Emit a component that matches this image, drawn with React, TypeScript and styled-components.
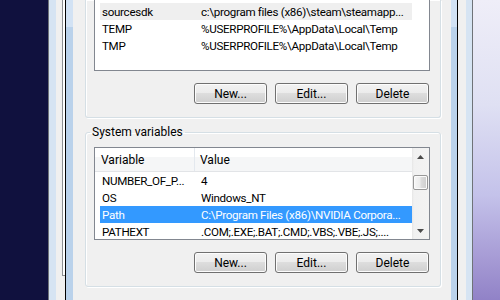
import React from "react";
import styled, { createGlobalStyle } from "styled-components";

const GlobalStyle = createGlobalStyle`
  html, body {
    margin: 0;
    padding: 0;
  }
  body {
    width: 500px;
    height: 300px;
    overflow: hidden;
    font-family: Roboto, "Liberation Sans", sans-serif;
    font-size: 11.6px;
    color: #000;
  }
`;

const Desktop = styled.div`
  display: flex;
  width: 500px;
  height: 300px;
  overflow: hidden;
`;

const Wallpaper = styled.div<{ $side: "left" | "right" }>`
  flex: ${(p) => (p.$side === "left" ? "0 0 48px" : "1")};
  background: ${(p) =>
    p.$side === "left"
      ? "#10113e"
      : "linear-gradient(180deg, #efeef8 0%, #dfe0f3 35%, #c4c2ea 65%, #a89dd6 85%, #9182c7 100%)"};
`;

// the System Properties window, behind
const BackWindow = styled.div`
  flex: 0 0 425px;
  display: flex;
  box-sizing: border-box;
  border-left: 1px solid #6f7378;
  border-right: 1px solid #6f7378;
  padding: 0 6px 0 7px;
  background: #d6e4f3;
`;

const BackBody = styled.div`
  flex: 1;
  display: flex;
  align-items: flex-start;
  padding: 0 8px 0 6px;
  background: #f0f0f0;
`;

const TabEdge = styled.div`
  flex: 0 0 3px;
  box-sizing: border-box;
  height: 276px;
  border-left: 1px solid #8d9093;
  border-bottom: 1px solid #8d9093;
  background: #fff;
`;

// the Environment Variables dialog, in front
const Dialog = styled.div`
  flex: 1;
  align-self: stretch;
  display: flex;
  box-sizing: border-box;
  border-left: 1px solid #000;
  border-right: 1px solid #000;
  padding: 0 6px 0 7px;
  background: linear-gradient(#d2e2f4 0 27px, #bad2eb 27px);
`;

const DialogBody = styled.div`
  flex: 1;
  display: flex;
  flex-direction: column;
  background: #f0f0f0;
`;

const GroupBox = styled.fieldset<{ $clipped?: boolean }>`
  margin: ${(p) => (p.$clipped ? "0" : "7px")} 10px 0 12px;
  padding: ${(p) => (p.$clipped ? "0" : "8px")} 10px 13px 8px;
  border: 1px solid #d5dfe5;
  border-top: ${(p) => (p.$clipped ? "none" : "1px solid #d5dfe5")};
  border-radius: ${(p) => (p.$clipped ? "0 0 3px 3px" : "3px")};
  box-shadow: inset 1px 1px 0 #fff, 1px 1px 0 #fff;
  min-inline-size: 0;
`;

const Legend = styled.legend`
  margin-left: -4px;
  padding: 1px 2px 0;
  line-height: 13px;
  font-size: 12px;
`;

const ListView = styled.div<{ $clipped?: boolean; $height: number }>`
  height: ${(p) => p.$height}px;
  box-sizing: border-box;
  display: flex;
  overflow: hidden;
  border: 1px solid #828790;
  border-top: ${(p) => (p.$clipped ? "none" : "1px solid #828790")};
  padding-top: ${(p) => (p.$clipped ? "3px" : "0")};
  background: #fff;
`;

const ListColumn = styled.div`
  flex: 1;
  display: flex;
  flex-direction: column;
  min-width: 0;
`;

const Header = styled.div`
  display: grid;
  grid-template-columns: 100px 1fr;
  height: 24px;
  box-sizing: border-box;
  border-bottom: 1px solid #e2e4e7;
  background: linear-gradient(#fff 0 40%, #f5f6f7 40%);
`;

const HeaderCell = styled.div<{ $divider?: boolean }>`
  box-sizing: border-box;
  padding: 2px 0 0 ${(p) => (p.$divider ? "6px" : "5px")};
  line-height: 21px;
  font-size: 12px;
  border-right: ${(p) => (p.$divider ? "1px solid #e3e8ee" : "none")};
`;

const Row = styled.div<{ $state?: "selected" | "inactive" }>`
  display: grid;
  grid-template-columns: 99px 1fr;
  width: 312px;
  height: 17px;
  margin-left: 5px;
  box-sizing: border-box;
  padding-top: 2px;
  line-height: 15px;
  letter-spacing: -0.3px;
  background: ${(p) =>
    p.$state === "selected" ? "#3399ff" : p.$state === "inactive" ? "#efefef" : "transparent"};
  color: ${(p) => (p.$state === "selected" ? "#fff" : "#000")};
`;

const Cell = styled.div`
  padding-left: 2px;
  white-space: nowrap;
  overflow: hidden;
`;

const ScrollBar = styled.div`
  flex: 0 0 17px;
  display: flex;
  flex-direction: column;
  align-items: center;
  background: linear-gradient(90deg, #e6e6e6 0, #f1f1f1 2px, #f3f3f3 100%);
`;

const ArrowButton = styled.div`
  height: 17px;
  width: 17px;
  display: flex;
  align-items: center;
  justify-content: center;
`;

const Thumb = styled.div`
  width: 15px;
  height: 15px;
  margin-top: 10px;
  box-sizing: border-box;
  border: 1px solid #979797;
  border-radius: 2px;
  background: linear-gradient(90deg, #f7f7f7 0%, #ececec 45%, #dcdcdc 55%, #cdcdcd 100%);
  box-shadow: inset 0 0 0 1px #fbfbfb;
`;

const Spacer = styled.div`
  flex: 1;
`;

const ButtonRow = styled.div`
  display: flex;
  justify-content: flex-end;
  gap: 8px;
  margin-top: 12px;
  padding-right: 1px;
`;

const PushButton = styled.button`
  width: 73px;
  height: 21px;
  padding: 1px 0 0;
  box-sizing: border-box;
  border: 1px solid #707070;
  border-radius: 3px;
  background: linear-gradient(#f2f2f2 0%, #ebebeb 50%, #dddddd 50%, #cfcfcf 100%);
  box-shadow: inset 0 0 0 1px #fcfcfc;
  font-family: inherit;
  font-size: 12px;
  color: #000;
`;

const Arrow = ({ up }: { up?: boolean }) => (
  <svg width="7" height="4" viewBox="0 0 7 4">
    <polygon points={up ? "0,4 3.5,0 7,4" : "0,0 7,0 3.5,4"} fill="#4a4a4a" />
  </svg>
);

interface IVariable {
  name: string;
  value: string;
  state?: "selected" | "inactive";
}

const userVars: IVariable[] = [
  { name: "sourcesdk", value: "c:\\program files (x86)\\steam\\steamapp...", state: "inactive" },
  { name: "TEMP", value: "%USERPROFILE%\\AppData\\Local\\Temp" },
  { name: "TMP", value: "%USERPROFILE%\\AppData\\Local\\Temp" },
];

const systemVars: IVariable[] = [
  { name: "NUMBER_OF_P...", value: "4" },
  { name: "OS", value: "Windows_NT" },
  { name: "Path", value: "C:\\Program Files (x86)\\NVIDIA Corpora...", state: "selected" },
  { name: "PATHEXT", value: ".COM;.EXE;.BAT;.CMD;.VBS;.VBE;.JS;...." },
];

const Buttons = () => (
  <ButtonRow>
    <PushButton>New...</PushButton>
    <PushButton>Edit...</PushButton>
    <PushButton>Delete</PushButton>
  </ButtonRow>
);

const App = () => {
  return (
    <>
      <GlobalStyle />
      <Desktop>
        <Wallpaper $side="left" />
        <BackWindow>
          <BackBody>
            <TabEdge />
            <Dialog>
              <DialogBody>
                <GroupBox $clipped>
                  <ListView $clipped $height={71}>
                    <ListColumn>
                      {userVars.map((v) => (
                        <Row key={v.name} $state={v.state}>
                          <Cell>{v.name}</Cell>
                          <Cell>{v.value}</Cell>
                        </Row>
                      ))}
                    </ListColumn>
                  </ListView>
                  <Buttons />
                </GroupBox>

                <GroupBox>
                  <Legend>System variables</Legend>
                  <ListView $height={93}>
                    <ListColumn>
                      <Header>
                        <HeaderCell $divider>Variable</HeaderCell>
                        <HeaderCell>Value</HeaderCell>
                      </Header>
                      {systemVars.map((v) => (
                        <Row key={v.name} $state={v.state}>
                          <Cell>{v.name}</Cell>
                          <Cell>{v.value}</Cell>
                        </Row>
                      ))}
                    </ListColumn>
                    <ScrollBar>
                      <ArrowButton>
                        <Arrow up />
                      </ArrowButton>
                      <Thumb />
                      <Spacer />
                      <ArrowButton>
                        <Arrow />
                      </ArrowButton>
                    </ScrollBar>
                  </ListView>
                  <Buttons />
                </GroupBox>
              </DialogBody>
            </Dialog>
          </BackBody>
        </BackWindow>
        <Wallpaper $side="right" />
      </Desktop>
    </>
  );
};

export default App;
